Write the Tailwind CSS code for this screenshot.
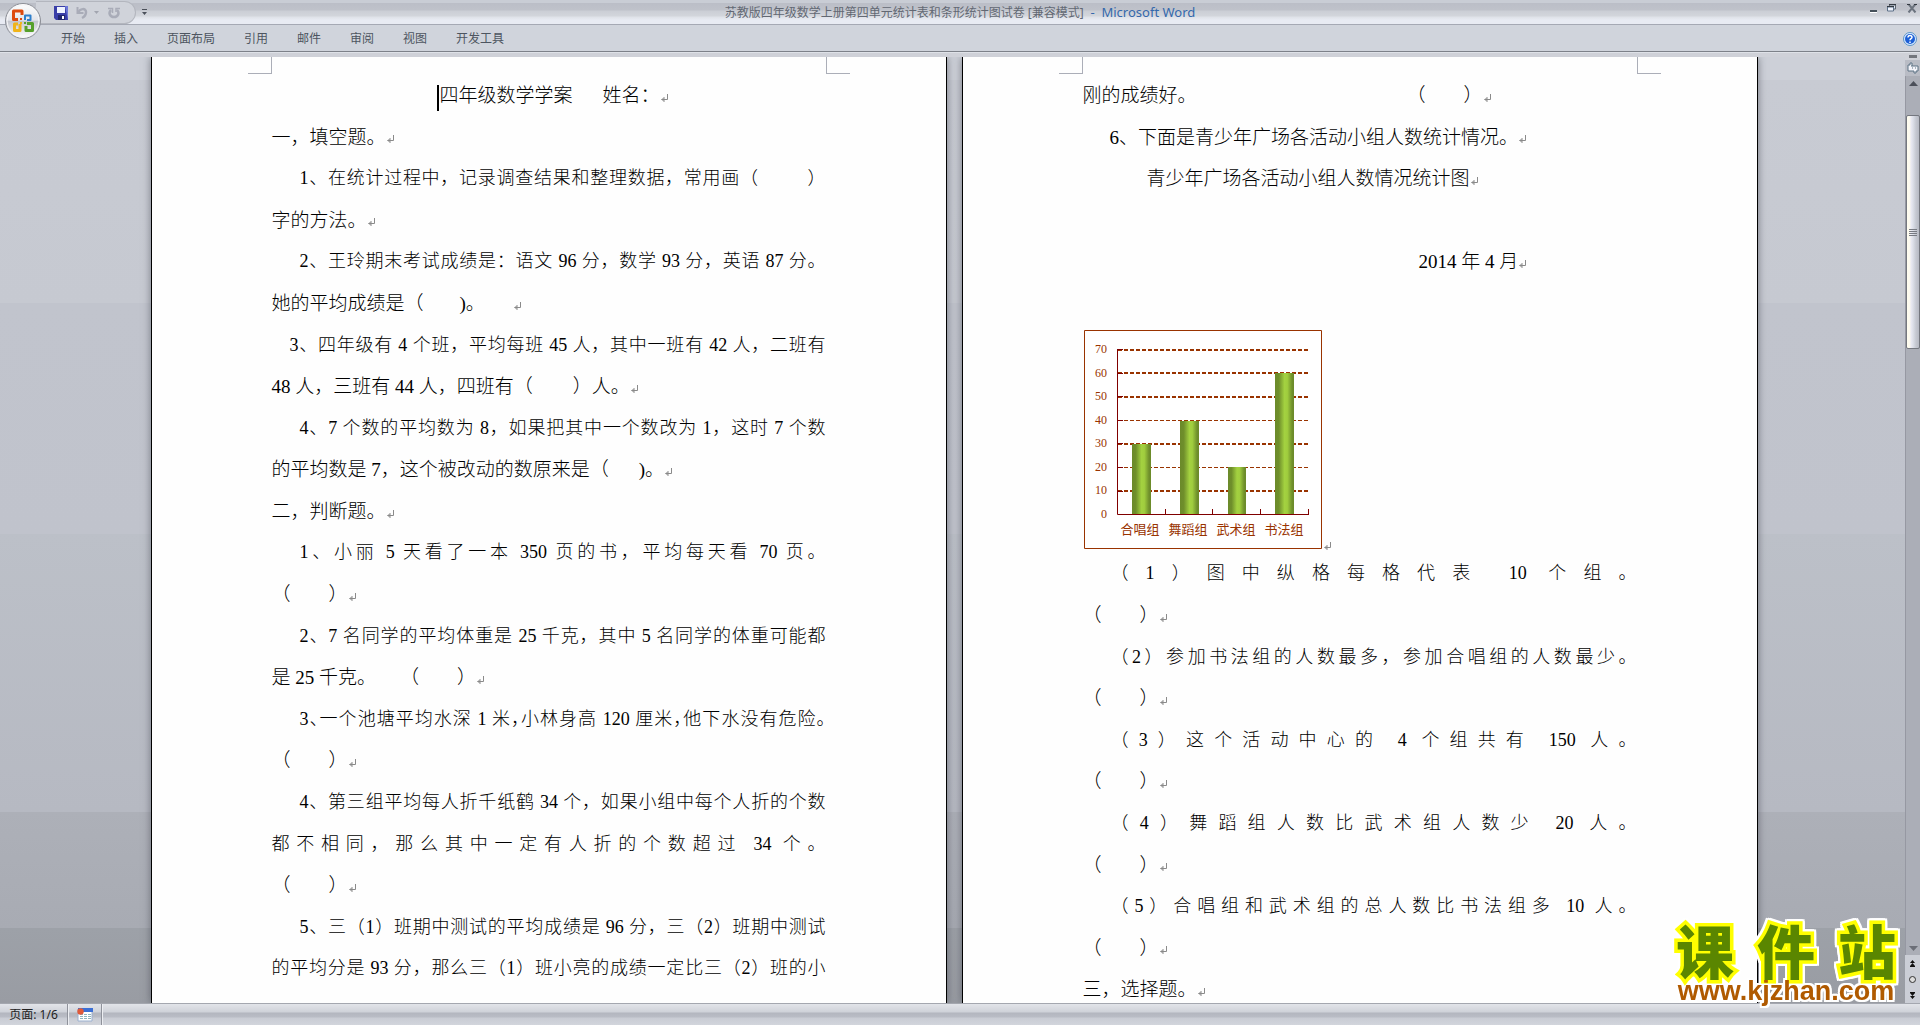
<!DOCTYPE html>
<html lang="zh-CN">
<head>
<meta charset="utf-8">
<title>Microsoft Word</title>
<script src="https://cdn.jsdelivr.net/npm/@tailwindcss/browser@4"></script>
</head>
<body class="relative flex h-screen flex-col overflow-hidden bg-[#cfd1d8] font-['Noto_Sans','Noto_Sans_CJK_SC',sans-serif] text-xs text-[#4d5560]">
<svg class="hidden" aria-hidden="true">
  <symbol id="ret" viewBox="0 0 8 8"><path d="M7.5 0v5.5H1.5M4 3v5M3 4v3M2 5v1" fill="none" stroke="#8a8a8a"/></symbol>
</svg>

<header class="shrink-0">
  <div class="relative flex h-[25px] items-center justify-center border-b border-[#a5a9b4] bg-[linear-gradient(#c9cdd5_0,#c9cdd5_3px,#bbbec7_3px,#bfc2ca_10px,#cbced5_11px,#d3d6dc_16px,#dfe2e8_17px,#e8ebf3_20px,#e8ebf3_24px)] pt-[2px]">
    <div class="absolute top-px left-9 flex h-[23px] w-[100px] items-center rounded-r-full border border-[#b3b6be] border-l-0 bg-[#d0d3da] pl-[18px]">
      <button aria-label="保存"><svg class="size-[14px]" viewBox="0 0 14 14"><path d="M0 0h14v14H2l-2-2z" fill="#3a3fa8"/><path d="M3 1h8v6H3z" fill="#eef3ff"/><path d="M11 0h3v14z" fill="#6d78d8"/><path d="M4 9h7v5H4z" fill="#20266e"/><path d="M8 10h2v3H8z" fill="#fff"/></svg></button>
      <button class="ml-2" aria-label="撤消"><svg class="h-[14px] w-3" viewBox="0 0 12 14"><path d="M1.500 1v6h6" fill="none" stroke="#a9acb8" stroke-width="2"/><path d="M2 7c2-5 8-5 8-1 0 3-2 5-4 6" fill="none" stroke="#a9acb8" stroke-width="2.500"/></svg></button>
      <button class="ml-[6px]" aria-label="撤消列表"><svg class="h-[3px] w-[5px]" viewBox="0 0 5 3"><path d="M0 0h5L2.500 3z" fill="#a2a5af"/></svg></button>
      <button class="ml-[9px]" aria-label="重复"><svg class="h-[14px] w-3" viewBox="0 0 12 14"><path d="M3 4c-3 3-1 7 3 7s6-4 3-7" fill="none" stroke="#a9acb8" stroke-width="2.500"/><path d="M0 2.500h4.500V7M8 6V2.500h4" fill="none" stroke="#a9acb8" stroke-width="1.500"/></svg></button>
    </div>
    <button class="absolute top-[9px] left-[142px]" aria-label="自定义快速访问工具栏"><svg class="h-[6px] w-[5px]" viewBox="0 0 5 6"><path d="M0 0h5v1H0zM0 3h5L2.500 6z" fill="#4b505a"/></svg></button>
    <h1 class="whitespace-pre text-[#626873]">苏教版四年级数学上册第四单元统计表和条形统计图试卷 [兼容模式]<span class="text-[13px] text-[#3468ac]">  -  Microsoft Word</span></h1>
    <div class="absolute top-1 right-[3px] flex gap-[10px]">
      <button aria-label="最小化"><svg class="h-[9px] w-2" viewBox="0 0 8 9"><path d="M1 6h7v2H1z" fill="#45505a"/><path d="M1 8h7v1H1z" fill="#fff"/></svg></button>
      <button aria-label="还原"><svg class="h-[9px] w-[10px]" viewBox="0 0 10 9"><path d="M2.500 4V1h6v4H7" fill="#dfe6f2" stroke="#5b6470"/><path d="M.5 3h6v4h-6z" fill="#eef2fb" stroke="#5b6f86"/><path d="M0 2h7v1H0zM2 0h7v1H2z" fill="#343a42"/></svg></button>
      <button aria-label="关闭"><svg class="h-[9px] w-[10px]" viewBox="0 0 10 9"><path d="M1.500 0l7 8.500M8.500 0l-7 8.500" stroke="#6b737e" stroke-width="2"/><path d="M0 .5h3M7 .5h3" stroke="#343a42"/></svg></button>
    </div>
  </div>
  <nav class="flex h-[27px] items-center gap-[29px] border-b border-[#7d8189] bg-[#d0d4dc] pt-[2px] pr-[3px] pl-[61px]">
    <button>开始</button><button>插入</button><button>页面布局</button><button>引用</button><button>邮件</button><button>审阅</button><button>视图</button><button>开发工具</button>
    <button class="ml-auto" aria-label="帮助"><svg class="size-[14px]" viewBox="0 0 14 14"><circle cx="7" cy="7" r="6.500" fill="#dcecff" stroke="#5b93c8"/><circle cx="7" cy="7" r="5" fill="#1d5fd6"/><path d="M5 5.500c0-3 4-2.500 4-.3C9 6.800 7 6.500 7 8.300M7 9.500V11" fill="none" stroke="#fff" stroke-width="1.500"/></svg></button>
  </nav>
  <div class="h-[5px] border-t border-[#dfe2e8] bg-[#cfd1d8]"></div>
</header>

<button class="absolute top-[2px] left-1" aria-label="Office 按钮">
  <svg class="size-[38px]" viewBox="0 0 38 38">
    <defs><linearGradient id="orb" x2="0" y2="1"><stop offset="0" stop-color="#fff"/><stop offset=".48" stop-color="#e3e5ea"/><stop offset=".5" stop-color="#c2c5cd"/><stop offset="1" stop-color="#fff"/></linearGradient></defs>
    <circle cx="19" cy="19" r="17.500" fill="url(#orb)" stroke="#8b8e96"/>
    <circle cx="19" cy="19" r="16" fill="none" stroke="#f6f6f8"/>
    <g fill="none" stroke-width="3" stroke-linejoin="round">
      <path d="M14 17.500H9.500V9H18v4" stroke="#dd4a0e"/>
      <path d="M21 17v-3.500h5.500V18H23" stroke="#2e7fcb" stroke-width="2"/>
      <path d="M16 22v6.500h-5.500V22H14" stroke="#f0b419"/>
      <path d="M23 21.500h5.500v7H22V24" stroke="#56a02a"/>
    </g>
    <path d="M16 16h2v2h-2z" fill="#dd4a0e"/><path d="M20 16h2v2h-2z" fill="#2e7fcb"/><path d="M16 20h2v2h-2z" fill="#f0b419"/><path d="M20 20h2v2h-2z" fill="#56a02a"/>
  </svg>
</button>

<div class="flex min-h-0 flex-1">
  <main class="flex min-w-0 flex-1 justify-center overflow-hidden bg-[linear-gradient(#cdd0d8_0,#cdd0d8_23px,#c8cbd3_23px,#c6c9d1_246px,#c1c4cd_246px,#c0c3cc_477px,#bcc0c8_477px,#b6b9c2_755px,#adb0b8_755px,#a8abb3_871px,#9da1a8_871px,#999ca3_946px)] pl-[3px] font-['Liberation_Serif','Noto_Sans_CJK_SC',serif] text-[19px] leading-[41px] font-light text-black">
    <div class="flex h-full gap-[15px]">
      <!-- page 1 -->
      <article class="relative flex w-[796px] shrink-0 flex-col border-x border-black bg-[#fefefe] px-[120px] pt-[18px] pb-[13px] whitespace-nowrap shadow-[0_0_8px_rgba(60,65,75,0.6)]">
        <i class="absolute top-0 left-24 h-[17px] w-6 border-r border-b border-[#abaeb8]"></i>
        <i class="absolute top-0 right-24 h-[17px] w-6 border-b border-l border-[#abaeb8]"></i>
        <div class="grid min-h-0 flex-1 grid-rows-[repeat(22,minmax(0,1fr))]">
          <p class="pl-[10px] text-center"><span class="-ml-[2px] inline-block h-[26px] w-[2px] bg-black align-middle"></span>四年级数学学案<span class="inline-block w-[30px]"></span>姓名：<svg class="inline size-2"><use href="#ret"/></svg></p>
          <p>一，填空题。<svg class="inline size-2"><use href="#ret"/></svg></p>
          <p class="pl-7 text-[18px] [text-align-last:justify]">1、在统计过程中，记录调查结果和整理数据，常用画（<span class="inline-block w-12"></span>）</p>
          <p>字的方法。<svg class="inline size-2"><use href="#ret"/></svg></p>
          <p class="pl-7 text-[18px] [text-align-last:justify]">2、王玲期末考试成绩是：语文 96 分，数学 93 分，英语 87 分。</p>
          <p>她的平均成绩是（<span class="inline-block w-9"></span>)。<span class="inline-block w-6"></span><svg class="ml-1 inline size-2"><use href="#ret"/></svg></p>
          <p class="pl-[18px] text-[18px] [text-align-last:justify]">3、四年级有 4 个班，平均每班 45 人，其中一班有 42 人，二班有</p>
          <p>48 人，三班有 44 人，四班有（<span class="inline-block w-10"></span>）人。<svg class="inline size-2"><use href="#ret"/></svg></p>
          <p class="pl-7 text-[18px] [text-align-last:justify]">4、7 个数的平均数为 8，如果把其中一个数改为 1，这时 7 个数</p>
          <p>的平均数是 7，这个被改动的数原来是（<span class="inline-block w-[30px]"></span>)。<svg class="inline size-2"><use href="#ret"/></svg></p>
          <p>二，判断题。<svg class="inline size-2"><use href="#ret"/></svg></p>
          <p class="pl-7 text-[18px] [text-align-last:justify]">1、小丽 5 天看了一本 350 页的书，平均每天看 70 页。</p>
          <p>（<span class="inline-block w-[38px]"></span>）<svg class="inline size-2"><use href="#ret"/></svg></p>
          <p class="pl-7 text-[18px] [text-align-last:justify]">2、7 名同学的平均体重是 25 千克，其中 5 名同学的体重可能都</p>
          <p>是 25 千克。<span class="inline-block w-6"></span>（<span class="inline-block w-[38px]"></span>）<svg class="inline size-2"><use href="#ret"/></svg></p>
          <p class="pl-7 text-[18px] [text-align-last:justify]">3<span class="[font-feature-settings:'halt']">、</span>一个池塘平均水深 1 米<span class="[font-feature-settings:'halt']">，</span>小林身高 120 厘米<span class="[font-feature-settings:'halt']">，</span>他下水没有危险<span class="[font-feature-settings:'halt']">。</span></p>
          <p>（<span class="inline-block w-[38px]"></span>）<svg class="inline size-2"><use href="#ret"/></svg></p>
          <p class="pl-7 text-[18px] [text-align-last:justify]">4、第三组平均每人折千纸鹤 34 个，如果小组中每个人折的个数</p>
          <p class="text-[18px] [text-align-last:justify]">都不相同，那么其中一定有人折的个数超过 34 个。</p>
          <p>（<span class="inline-block w-[38px]"></span>）<svg class="inline size-2"><use href="#ret"/></svg></p>
          <p class="pl-7 text-[18px] [text-align-last:justify]">5、三（1）班期中测试的平均成绩是 96 分，三（2）班期中测试</p>
          <p class="text-[18px] [text-align-last:justify]">的平均分是 93 分，那么三（1）班小亮的成绩一定比三（2）班的小</p>
        </div>
      </article>

      <!-- page 2 -->
      <article class="relative flex w-[796px] shrink-0 flex-col border-x border-black bg-[#fefefe] px-[120px] pt-[18px] whitespace-nowrap shadow-[0_0_8px_rgba(60,65,75,0.6)]">
        <i class="absolute top-0 left-24 h-[17px] w-6 border-r border-b border-[#abaeb8]"></i>
        <i class="absolute top-0 right-24 h-[17px] w-6 border-b border-l border-[#abaeb8]"></i>
        <div class="-mb-2 grid min-h-0 flex-1 grid-rows-[repeat(5,minmax(0,2fr))_minmax(0,13fr)_repeat(11,minmax(0,2fr))]">
          <p>刚的成绩好。<span class="inline-block w-[210px]"></span>（<span class="inline-block w-[38px]"></span>）<svg class="inline size-2"><use href="#ret"/></svg></p>
          <p class="pl-[27px]">6、下面是青少年广场各活动小组人数统计情况。<svg class="inline size-2"><use href="#ret"/></svg></p>
          <p class="pl-16">青少年广场各活动小组人数情况统计图<svg class="inline size-2"><use href="#ret"/></svg></p>
          <p></p>
          <p class="pl-[336px]">2014 年 4 月<svg class="inline size-2"><use href="#ret"/></svg></p>
          <div class="flex items-end pb-[3px]">
            <svg class="ml-px h-[220px] w-[239px]" viewBox="0 0 239 220" role="img" aria-label="青少年广场各活动小组人数情况统计图">
              <defs><linearGradient id="bar"><stop offset="0" stop-color="#6b8a2a"/><stop offset=".2" stop-color="#6f8f2b"/><stop offset=".5" stop-color="#a3d140"/><stop offset=".65" stop-color="#a0cd3e"/><stop offset=".9" stop-color="#6f8f2b"/><stop offset="1" stop-color="#6b8a2a"/></linearGradient></defs>
              <path d="M.5.5h237v218H.5z" fill="#fff" stroke="#993300"/>
              <path d="M34 20h191M34 43h191M34 67h191M34 114h191M34 161h191" stroke="#993300" stroke-width="2" stroke-dasharray="4 2"/>
              <path d="M34 90.500h191M34 137.500h191" stroke="#993300" stroke-dasharray="4 2"/>
              <g fill="url(#bar)"><path d="M48 114h19v70H48z"/><path d="M96 91h19v93H96z"/><path d="M144 137h18v47h-18z"/><path d="M191 43h19v141h-19z"/></g>
              <path d="M33.500 19v165.500H224.500M34 19.500h5M34 43.500h5M34 66.500h5M34 90.500h5M34 113.500h5M34 137.500h5M34 161.500h5M81.500 184v-5M128.500 184v-5M176.500 184v-5M224.500 185v-6" fill="none" stroke="#800000"/>
              <g class="text-xs" fill="#993300" text-anchor="end"><text x="23" y="23">70</text><text x="23" y="47">60</text><text x="23" y="70">50</text><text x="23" y="94">40</text><text x="23" y="117">30</text><text x="23" y="141">20</text><text x="23" y="164">10</text><text x="23" y="188">0</text></g>
              <g class="text-[13px] font-normal" fill="#993300" text-anchor="middle"><text x="56" y="204">合唱组</text><text x="104" y="204">舞蹈组</text><text x="152" y="204">武术组</text><text x="200" y="204">书法组</text></g>
            </svg>
            <svg class="size-2"><use href="#ret"/></svg>
          </div>
          <p class="pl-7 text-[18px] [text-align-last:justify]">（1）图中纵格每格代表 10 个组。</p>
          <p>（<span class="inline-block w-[38px]"></span>）<svg class="inline size-2"><use href="#ret"/></svg></p>
          <p class="pl-7 text-[18px] [text-align-last:justify]">（2）参加书法组的人数最多，参加合唱组的人数最少。</p>
          <p>（<span class="inline-block w-[38px]"></span>）<svg class="inline size-2"><use href="#ret"/></svg></p>
          <p class="pl-7 text-[18px] [text-align-last:justify]">（3）这个活动中心的 4 个组共有 150 人。</p>
          <p>（<span class="inline-block w-[38px]"></span>）<svg class="inline size-2"><use href="#ret"/></svg></p>
          <p class="pl-7 text-[18px] [text-align-last:justify]">（4）舞蹈组人数比武术组人数少 20 人。</p>
          <p>（<span class="inline-block w-[38px]"></span>）<svg class="inline size-2"><use href="#ret"/></svg></p>
          <p class="pl-7 text-[18px] [text-align-last:justify]">（5）合唱组和武术组的总人数比书法组多 10 人。</p>
          <p>（<span class="inline-block w-[38px]"></span>）<svg class="inline size-2"><use href="#ret"/></svg></p>
          <p>三，选择题。<svg class="inline size-2"><use href="#ret"/></svg></p>
        </div>
      </article>
    </div>
  </main>

  <!-- vertical scroll bar -->
  <aside class="-mt-1 flex w-[15px] shrink-0 flex-col items-center bg-[#b9bcc5]">
    <div class="flex h-[7px] w-full items-center justify-center bg-[#cfd1d8]"><i class="h-[3px] w-2 bg-[#73767d]"></i></div>
    <button class="flex h-4 w-full items-center justify-center" aria-label="标尺"><svg class="size-3" viewBox="0 0 12 12"><path d="M1 3h2V1h2v3h6v5H9v2H7V9H1z" fill="#f4f4fa" stroke="#5d7284"/><path d="M5 6h1M8 6h1M4 4h1" stroke="#5d7284"/></svg></button>
    <div class="flex min-h-0 w-full flex-1 flex-col items-center border-l border-[#9698a2] bg-[#abaeb7]">
      <button class="flex h-[39px] pt-[5px]" aria-label="向上滚动"><svg class="h-[5px] w-[9px]" viewBox="0 0 9 5"><path d="M4.500 0L9 5H0z" fill="#4c505a"/></svg></button>
      <div class="flex h-[234px] w-full flex-col items-center justify-center gap-px rounded-xs border border-[#74777f] bg-[linear-gradient(90deg,#fffdf0_0,#fdfaee_20%,#e9e9f2_35%,#dcdfe8_50%,#c5c8d1_75%,#b7bac4)]"><i class="h-px w-2 bg-[#777a82]"></i><i class="h-px w-2 bg-[#777a82]"></i><i class="h-px w-2 bg-[#777a82]"></i><i class="h-px w-2 bg-[#777a82]"></i></div>
      <button class="mt-auto pb-1" aria-label="向下滚动"><svg class="h-[5px] w-[9px]" viewBox="0 0 9 5"><path d="M4.500 5L9 0H0z" fill="#6b6e77"/></svg></button>
    </div>
    <div class="flex h-12 w-full flex-col items-center justify-around bg-[#cbced6]">
      <button aria-label="前一页"><svg class="block h-[7px] w-[5px]" viewBox="0 0 5 7"><path d="M2.500 0L5 3H0zM2.500 3L5 6H0zM0 6h5v1H0z" fill="#111"/></svg></button>
      <button aria-label="选择浏览对象"><svg class="block size-[7px]" viewBox="0 0 7 7"><circle cx="3.500" cy="3.500" r="3" fill="#ddd" stroke="#333"/></svg></button>
      <button aria-label="下一页"><svg class="block h-[7px] w-[5px]" viewBox="0 0 5 7"><path d="M2.500 7L5 4H0zM2.500 4L5 1H0zM0 0h5v1H0z" fill="#111"/></svg></button>
    </div>
  </aside>
</div>

<footer class="flex h-[22px] shrink-0 items-stretch border-t border-[#a4a7af] bg-[linear-gradient(#e2e4e9_0,#cfd2d9_8px,#b3b6bf_9px,#b9bcc5_13px,#c9ccd4_14px,#d2d5dc_21px)] text-[#222]">
  <button class="w-[67px] text-[12px]">页面: 1/6</button>
  <button class="flex w-[35px] items-center justify-center border-x border-[#8f929b] shadow-[inset_1px_0_#eceef2,1px_0_#eceef2]" aria-label="录制宏"><svg class="h-[14px] w-4" viewBox="0 0 16 14"><path d="M1 1h14v12H1z" fill="#fff" stroke="#9bb0cf"/><path d="M1 0h15v4H1z" fill="#3b6fd4"/><path d="M3 6.500h11M3 8.500h11M3 10.500h11" stroke="#8eb4bd" stroke-dasharray="3 1"/><circle cx="3.500" cy="3.500" r="3.200" fill="#e05a3a"/></svg></button>
</footer>

<!-- site mark lying over the window corner -->
<a href="#" class="absolute right-[18px] bottom-[20px] block w-[232px] font-['Noto_Sans_CJK_SC',sans-serif] leading-none [filter:drop-shadow(2px_0_0_#fff)_drop-shadow(-2px_0_0_#fff)_drop-shadow(0_2px_0_#fff)_drop-shadow(0_-2px_0_#fff)]">
  <span class="flex items-center justify-between px-[6px] text-[58px] leading-[58px] font-black text-[#5a8600] [-webkit-text-stroke:7px_#ffff00] [paint-order:stroke_fill]"><span>课</span><span>件</span><span>站</span></span>
  <span class="block text-center font-['Liberation_Sans',sans-serif] text-[27px] leading-[27px] font-bold text-[#b05a00]">www.kjzhan.com</span>
</a>
</body>
</html>
